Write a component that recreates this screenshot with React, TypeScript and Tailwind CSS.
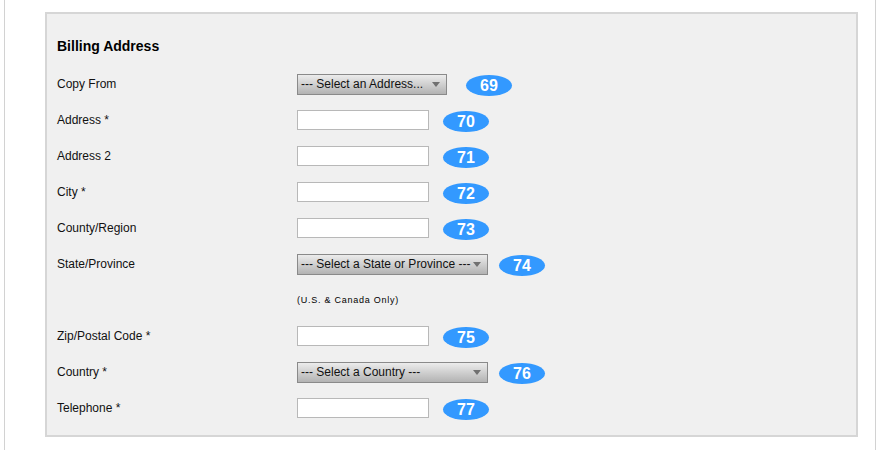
import React from 'react';

type Row =
    | { label: string; kind: 'input'; badge: number }
    | { label: string; kind: 'select'; text: string; width: string; badge: number; gap: string }
    | { label: string; kind: 'note'; text: string };

const rows: Row[] = [
    { label: 'Copy From', kind: 'select', text: '--- Select an Address...', width: 'w-[150px]', badge: 69, gap: 'ml-[19px]' },
    { label: 'Address *', kind: 'input', badge: 70 },
    { label: 'Address 2', kind: 'input', badge: 71 },
    { label: 'City *', kind: 'input', badge: 72 },
    { label: 'County/Region', kind: 'input', badge: 73 },
    { label: 'State/Province', kind: 'select', text: '--- Select a State or Province ---', width: 'w-[191px]', badge: 74, gap: 'ml-[11px]' },
    { label: '', kind: 'note', text: '(U.S. & Canada Only)' },
    { label: 'Zip/Postal Code *', kind: 'input', badge: 75 },
    { label: 'Country *', kind: 'select', text: '--- Select a Country ---', width: 'w-[191px]', badge: 76, gap: 'ml-[11px]' },
    { label: 'Telephone *', kind: 'input', badge: 77 },
];

const Badge: React.FC<{ n: number; className?: string }> = ({ n, className = '' }) => (
    <div className={`w-[46px] h-[21px] rounded-[50%] bg-[#3399ff] text-white font-bold text-[16px] leading-[21px] text-center mt-[3px] ${className}`}>
        {n}
    </div>
);

const FakeSelect: React.FC<{ text: string; width: string }> = ({ text, width }) => (
    <div className={`${width} h-[21px] border border-[#8a8a8a] bg-gradient-to-b from-[#ececec] to-[#b3b3b3] flex items-center justify-between pl-[3px] pr-[6px] text-[12px] text-[#111]`}>
        <span className="whitespace-nowrap">{text}</span>
        <span className="w-0 h-0 border-l-[4px] border-r-[4px] border-t-[5px] border-l-transparent border-r-transparent border-t-[#707070]" />
    </div>
);

export default function App() {
    return (
        <div className="w-[884px] h-[450px] bg-white" style={{ fontFamily: '"Liberation Sans", Arial, sans-serif' }}>
            <div className="ml-[4px] w-[872px] h-[450px] border-x border-[#d2d2d2] pt-[12px] pl-[40px]">
                <div className="w-[813px] h-[425px] border-2 border-[#d6d6d6] bg-[#f0f0f0] pl-[10px] pt-[23px]">
                    <h2 className="text-[14px] font-bold text-black leading-[18px] h-[29px]">Billing Address</h2>
                    {rows.map((row, i) => (
                        <div key={i} className="h-[36px] flex items-center">
                            <div className="w-[240px] text-[12px] text-[#111] leading-[14px]">{row.label}</div>
                            {row.kind === 'input' && (
                                <>
                                    <div className="w-[132px] h-[20px] bg-white border border-[#b8b8b8]" />
                                    <Badge n={row.badge} className="ml-[14px]" />
                                </>
                            )}
                            {row.kind === 'select' && (
                                <>
                                    <FakeSelect text={row.text} width={row.width} />
                                    <Badge n={row.badge} className={row.gap} />
                                </>
                            )}
                            {row.kind === 'note' && (
                                <div className="text-[9px] text-black tracking-[0.75px] mt-[2px]">{row.text}</div>
                            )}
                        </div>
                    ))}
                </div>
            </div>
        </div>
    );
}
